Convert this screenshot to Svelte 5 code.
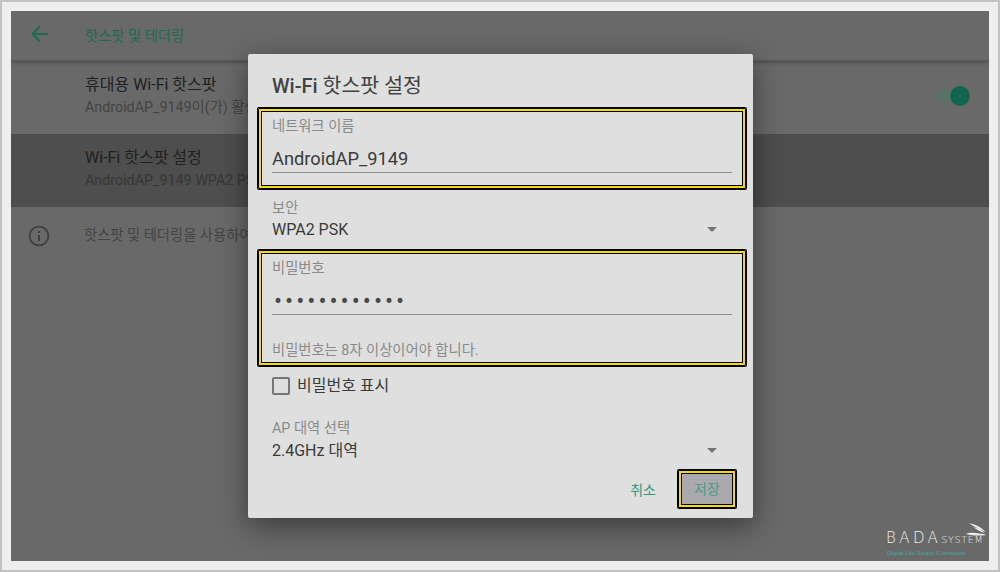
<script>
  let fields = { name: 'AndroidAP_9149', security: 'WPA2 PSK', band: '2.4GHz 대역' };
  let dots = '•'.repeat(12);
</script>

<div class="frame">
  <div class="screen">
    <header class="bar">
      <svg class="back" width="24" height="24" viewBox="0 0 24 24"><path d="M20 12H5M12 4.5 4.5 12l7.5 7.5" fill="none" stroke="#1c6b52" stroke-width="2"/></svg>
      <span class="bar-title">핫스팟 및 테더링</span>
    </header>
    <div class="row first">
      <div class="row-text">
        <div class="primary">휴대용 Wi-Fi 핫스팟</div>
        <div class="secondary">AndroidAP_9149이(가) 활성</div>
      </div>
      <div class="switch"><span class="track"></span><span class="thumb"></span></div>
    </div>
    <div class="row active">
      <div class="row-text">
        <div class="primary">Wi-Fi 핫스팟 설정</div>
        <div class="secondary">AndroidAP_9149 WPA2 PSK</div>
      </div>
    </div>
    <div class="info">
      <svg width="24" height="24" viewBox="0 0 24 24"><circle cx="12" cy="12" r="9.4" fill="none" stroke="#3f3f3f" stroke-width="1.8"/><path d="M12 11v6M12 7v2" stroke="#3f3f3f" stroke-width="2"/></svg>
      <span>핫스팟 및 테더링을 사용하여</span>
    </div>

    <div class="logo">
      <svg class="swoosh" width="22" height="13" viewBox="0 0 22 13"><path d="M4 0c6 1 12 4 17 9C15 6 9 4 4 0zM8 4c5 1 9 3 12 6-4-1-8-3-12-6zM1 11c5-2 9-1 13-.4 3 .4 5 .4 7 1.4-6 1-13 .8-20-1z" fill="#eee"/></svg>
      <div class="brand"><span class="bada">BADA</span><span class="system">SYSTEM</span></div>
      <div class="tag">Digital Life Simply Connected</div>
    </div>

    <div class="dialog">
      <h2>Wi-Fi <span class="ko">핫스팟 설정</span></h2>
      <div class="mark name-box">
        <div class="label">네트워크 이름</div>
        <div class="value input">{fields.name}</div>
      </div>
      <div class="label sec-label">보안</div>
      <div class="value select">{fields.security}<span class="caret"></span></div>
      <div class="mark pass-box">
        <div class="label">비밀번호</div>
        <div class="value input dots">{dots}</div>
        <div class="hint">비밀번호는 8자 이상이어야 합니다.</div>
      </div>
      <div class="check"><span class="box"></span>비밀번호 표시</div>
      <div class="label band-label">AP 대역 선택</div>
      <div class="value select band">{fields.band}<span class="caret"></span></div>
      <div class="actions">
        <span class="btn">취소</span>
        <span class="btn save">저장</span>
      </div>
    </div>
  </div>
</div>

<style>
  :global(body) {
    margin: 0;
    font-family: Roboto, "Noto Sans CJK KR", sans-serif;
  }
  .frame {
    box-sizing: border-box;
    width: 1000px;
    height: 572px;
    padding: 9px;
    background: #eeeeee;
    border: 2px solid #c2c2c2;
  }
  .screen {
    position: relative;
    height: 550px;
    width: 978px;
    background: #696969;
    overflow: hidden;
  }
  .bar {
    box-sizing: border-box;
    display: flex;
    align-items: center;
    height: 50px;
    padding: 0 0 3px 17px;
    gap: 33px;
    box-shadow: 0 2px 3px rgba(0, 0, 0, 0.25);
    border-bottom: 1px solid #5a5a5a;
  }
  .bar-title {
    color: #1c6b52;
    font-size: 14.3px;
  }
  .row {
    box-sizing: border-box;
    display: flex;
    align-items: center;
    justify-content: space-between;
    height: 73px;
    padding: 0 19px 3px 74px;
  }
  .row.active {
    background: #4e4e4e;
  }
  .primary {
    color: #1f1f1f;
    font-size: 16px;
    line-height: 23px;
  }
  .secondary {
    color: #444444;
    font-size: 14.3px;
    line-height: 23px;
  }
  .active .secondary {
    color: #363636;
  }
  .switch {
    position: relative;
    width: 34px;
    height: 20px;
  }
  .track {
    position: absolute;
    left: 0;
    top: 3px;
    width: 30px;
    height: 14px;
    border-radius: 7px;
    background: #5c7168;
  }
  .thumb {
    position: absolute;
    right: 0;
    top: 0;
    width: 20px;
    height: 20px;
    border-radius: 50%;
    background: #14654f;
  }
  .info {
    display: flex;
    align-items: center;
    gap: 33px;
    padding: 16px 0 0 16px;
    color: #444444;
    font-size: 14.3px;
  }
  .info span {
    padding-bottom: 4px;
  }
  .logo {
    position: absolute;
    left: 875px;
    top: 512px;
    width: 102px;
    height: 36px;
  }
  .swoosh {
    position: absolute;
    right: 1px;
    top: 0;
  }
  .brand {
    position: absolute;
    left: 0;
    top: 7px;
    display: flex;
    align-items: baseline;
    color: #eeeeee;
    white-space: nowrap;
    font-family: "DejaVu Sans", sans-serif;
    font-weight: 200;
    line-height: 16px;
  }
  .bada {
    font-size: 15px;
    letter-spacing: 3.4px;
  }
  .system {
    font-size: 9.5px;
    letter-spacing: 0.7px;
  }
  .tag {
    position: absolute;
    left: 1px;
    top: 27px;
    font-size: 6px;
    color: #3fa9a5;
    white-space: nowrap;
    font-family: "Liberation Sans", sans-serif;
  }
  .dialog {
    position: absolute;
    left: 237px;
    top: 43px;
    box-sizing: border-box;
    width: 505px;
    height: 464px;
    padding: 18px 21px 0 24px;
    background: #dfdfdf;
    border-radius: 2px;
    box-shadow: 0 8px 28px rgba(0, 0, 0, 0.45);
  }
  h2 {
    margin: 0;
    font-size: 20px;
    line-height: 28px;
    font-weight: 500;
    color: #424242;
  }
  .ko {
    font-size: 20.5px;
    font-weight: 400;
  }
  .mark {
    box-sizing: border-box;
    margin: 8px -14px 0;
    padding: 6px 11px 0;
    border: 3px solid #f5d90a;
    outline: 1px solid #000;
    outline-offset: -1px;
    box-shadow: 0 0 0 1px #000, inset 0 0 0 1px #000;
    border-radius: 1px;
  }
  .name-box {
    height: 81px;
  }
  .pass-box {
    margin-top: 9px;
    height: 116px;
  }
  .label {
    color: #8a8a8a;
    font-size: 14.3px;
    line-height: 18px;
  }
  .value {
    color: #3a3a3a;
    font-size: 16px;
    position: relative;
  }
  .input {
    box-sizing: border-box;
    height: 33px;
    line-height: 38px;
    margin-top: 5px;
    border-bottom: 1px solid #8f8f8f;
    font-size: 18.3px;
  }
  .dots {
    padding-left: 2px;
    letter-spacing: 3px;
    font-size: 24px;
    color: #4a4a4a;
  }
  .hint {
    margin-top: 26px;
    color: #8a8a8a;
    font-size: 14.3px;
    line-height: 18px;
  }
  .sec-label {
    margin-top: 10px;
  }
  .select {
    line-height: 26px;
    height: 24px;
  }
  .band {
    margin-top: 1px;
  }
  .caret {
    position: absolute;
    right: 15px;
    top: 10px;
    border-left: 5px solid transparent;
    border-right: 5px solid transparent;
    border-top: 5px solid #757575;
  }
  .check {
    display: flex;
    align-items: center;
    gap: 7px;
    margin-top: 8px;
    color: #3a3a3a;
    font-size: 16px;
    line-height: 24px;
  }
  .box {
    box-sizing: border-box;
    width: 18px;
    height: 18px;
    border: 2px solid #757575;
    border-radius: 2px;
  }
  .band-label {
    margin-top: 21px;
  }
  .actions {
    display: flex;
    justify-content: flex-end;
    align-items: center;
    gap: 22px;
    margin: 8px -4px 0 0;
  }
  .btn {
    color: #2f9a7f;
    font-size: 14px;
  }
  .save {
    box-sizing: border-box;
    width: 58px;
    height: 38px;
    line-height: 32px;
    text-align: center;
    color: #4f9a88;
    background: #a9a9ae;
    border: 3px solid #f5d90a;
    outline: 1px solid #000;
    outline-offset: -1px;
    box-shadow: 0 0 0 1px #000, inset 0 0 0 1px #000;
    border-radius: 1px;
  }
</style>
